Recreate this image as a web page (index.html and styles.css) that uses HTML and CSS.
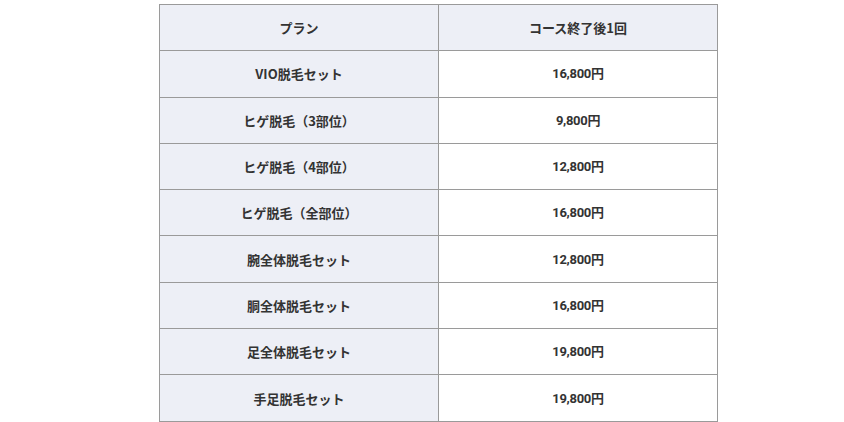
FILE: index.html
```html
<!DOCTYPE html>
<html lang="ja">
<head>
<meta charset="utf-8">
<link rel="stylesheet" href="styles.css">
</head>
<body>
<div class="wrap">
<table class="price">
  <thead>
    <tr><th>プラン</th><th>コース終了後1回</th></tr>
  </thead>
  <tbody>
    <tr><th>VIO脱毛セット</th><td>16,800円</td></tr>
    <tr><th>ヒゲ脱毛（3部位）</th><td>9,800円</td></tr>
    <tr><th>ヒゲ脱毛（4部位）</th><td>12,800円</td></tr>
    <tr><th>ヒゲ脱毛（全部位）</th><td>16,800円</td></tr>
    <tr><th>腕全体脱毛セット</th><td>12,800円</td></tr>
    <tr><th>胴全体脱毛セット</th><td>16,800円</td></tr>
    <tr><th>足全体脱毛セット</th><td>19,800円</td></tr>
    <tr><th>手足脱毛セット</th><td>19,800円</td></tr>
  </tbody>
</table>
</div>
</body>
</html>
```

FILE: styles.css
```css
html, body {
  margin: 0;
  padding: 0;
  background: #ffffff;
}
body {
  font-family: "Noto Sans CJK JP", "Noto Sans", sans-serif;
  color: #333333;
}
.wrap {
  padding: 4px 0 0 159px;
}
.price {
  width: 559px;
  border-collapse: collapse;
  table-layout: fixed;
}
.price th,
.price td {
  border: 1px solid #9a9a9a;
  height: 45.3px;
  padding: 0;
  text-align: center;
  vertical-align: middle;
  font-size: 13px;
  font-weight: 700;
  line-height: 1;
  color: #333333;
}
.price th {
  background: #edeff6;
}
.price td {
  background: #ffffff;
  font-family: Roboto, "Noto Sans CJK JP", sans-serif;
  letter-spacing: -0.3px;
}
```
